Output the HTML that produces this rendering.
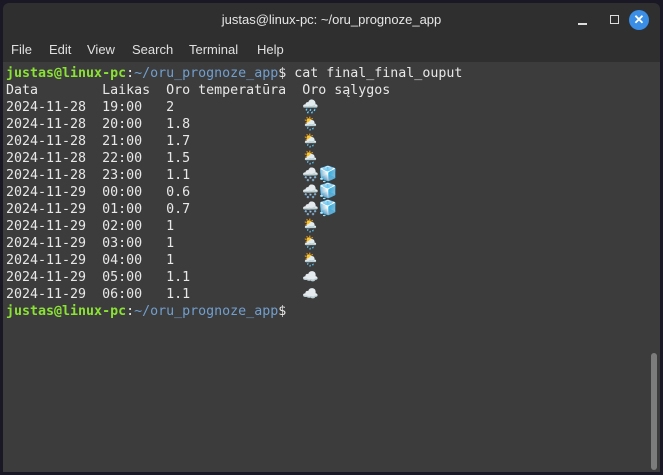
<!DOCTYPE html><html><head><style>
body{margin:0;width:663px;height:475px;background:#1a1824;overflow:hidden;font-family:"Liberation Sans",sans-serif}
.win{position:absolute;left:3px;top:3px;width:657px;height:469px;background:#2f2f2f;border-radius:6px 6px 0 0;overflow:hidden}
.title{position:absolute;top:0;left:0;right:0;height:36px;color:#e6e6e6;font-size:13px;text-align:center;line-height:34px}
.menu{position:absolute;top:36px;left:0;right:0;height:23px;color:#e0e0e0;font-size:13px}
.menu span{position:absolute;top:3px}
.term{position:absolute;top:59px;left:0;right:0;bottom:0;background:#3c3c3c}
pre{margin:0;position:absolute;left:3px;top:3px;font-family:"DejaVu Sans Mono","Liberation Mono",monospace;font-size:13.3px;line-height:17px;color:#e8e8e8}
.g{color:#8ae234;font-weight:bold}.b{color:#729fcf}
.e{font-size:15px;line-height:10px}
.sb{position:absolute;left:648px;top:291px;width:6px;height:117px;background:#7c7c7c;border-radius:3px}
.x{position:absolute;left:626px;top:7px;width:20px;height:20px;border-radius:50%;background:#3a8ee6;color:#fff;font-size:13px;line-height:20px;text-align:center;font-weight:bold}
</style></head><body><div class="win">
<div class="title">justas@linux-pc: ~/oru_prognoze_app</div>
<div style="position:absolute;left:575px;top:20px;width:9px;height:1.5px;background:#ddd"></div>
<div style="position:absolute;left:607px;top:12px;width:7px;height:7px;border:1.5px solid #ddd"></div>
<div class="x">✕</div>
<div class="menu"><span style="left:8px">File</span><span style="left:46px">Edit</span><span style="left:84px">View</span><span style="left:129px">Search</span><span style="left:186px">Terminal</span><span style="left:254px">Help</span></div>
<div class="term"><pre><span class="g">justas@linux-pc</span>:<span class="b">~/oru_prognoze_app</span>$ cat final_final_ouput
Data        Laikas  Oro temperatūra  Oro sąlygos
2024-11-28  19:00   2                🌧️
2024-11-28  20:00   1.8              🌦️
2024-11-28  21:00   1.7              🌦️
2024-11-28  22:00   1.5              🌦️
2024-11-28  23:00   1.1              🌨️<span class="e">🧊</span>
2024-11-29  00:00   0.6              🌨️<span class="e">🧊</span>
2024-11-29  01:00   0.7              🌨️<span class="e">🧊</span>
2024-11-29  02:00   1                🌦️
2024-11-29  03:00   1                🌦️
2024-11-29  04:00   1                🌦️
2024-11-29  05:00   1.1              ☁️
2024-11-29  06:00   1.1              ☁️
<span class="g">justas@linux-pc</span>:<span class="b">~/oru_prognoze_app</span>$</pre>
<div class="sb"></div></div>
</div></body></html>
